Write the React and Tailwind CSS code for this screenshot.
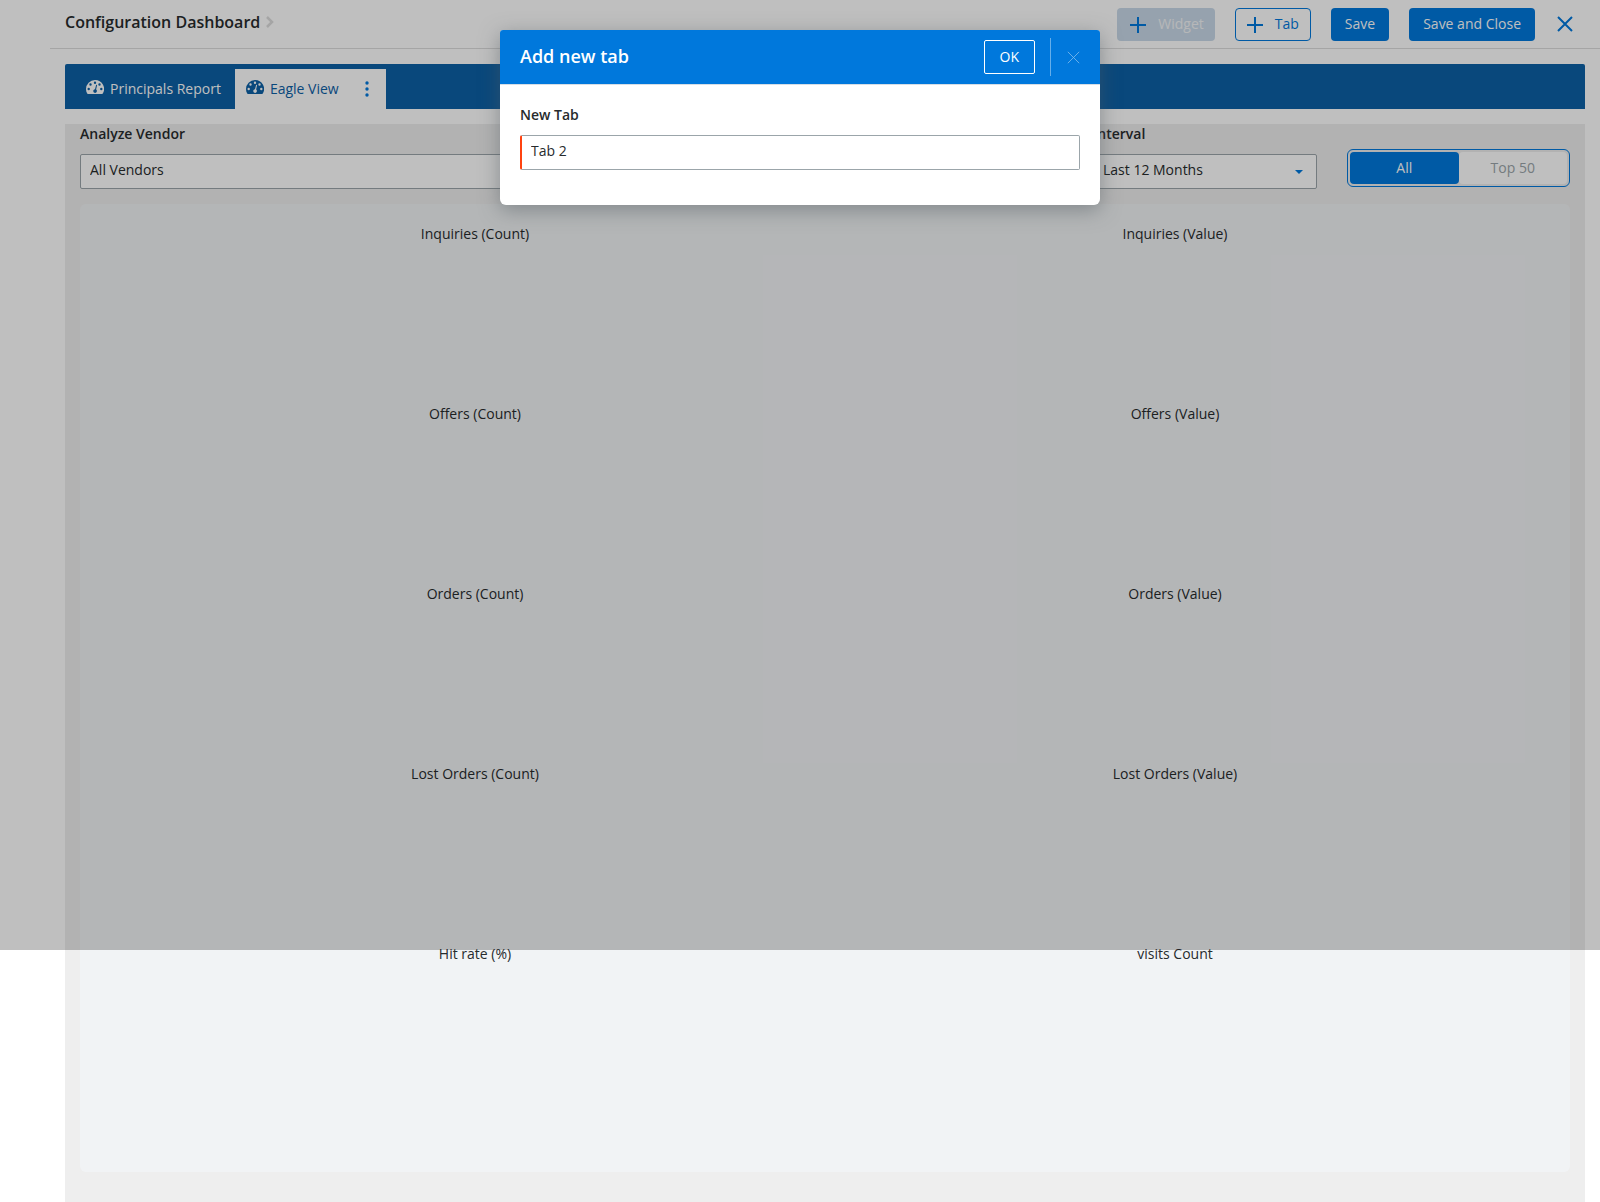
import { useState } from "react";

const TABS = [
  { id: "principals", label: "Principals Report" },
  { id: "eagle", label: "Eagle View" },
];

const WIDGETS = [
  "Inquiries (Count)",
  "Inquiries (Value)",
  "Offers (Count)",
  "Offers (Value)",
  "Orders (Count)",
  "Orders (Value)",
  "Lost Orders (Count)",
  "Lost Orders (Value)",
  "Hit rate (%)",
  "visits Count",
];

function GaugeIcon() {
  return (
    <svg width="18" height="14" viewBox="0 0 18 14" className="mb-1" aria-hidden="true">
      <path
        fill="currentColor"
        fillRule="evenodd"
        d="M9 0a9 9 0 0 0-9 9c0 1.700.4 3.200 1.200 4.600.2.300.4.400.7.400h14.200c.3 0 .5-.1.700-.4A9 9 0 0 0 9 0zM9 1.500a1.200 1.200 0 1 1 0 2.400 1.200 1.200 0 0 1 0-2.400zM4.500 3.300a1.200 1.200 0 1 1 0 2.400 1.200 1.200 0 0 1 0-2.400zM2.700 7.800a1.200 1.200 0 1 1 0 2.400 1.200 1.200 0 0 1 0-2.400zM15.300 7.800a1.200 1.200 0 1 1 0 2.400 1.200 1.200 0 0 1 0-2.400zM13.500 3.300a1.200 1.200 0 1 1 0 2.400 1.200 1.200 0 0 1 0-2.400zM10.200 4.700l.9.200-1 4.700a1.800 1.800 0 1 1-1.100-.3z"
      />
    </svg>
  );
}

function PlusIcon() {
  return (
    <svg width="16" height="16" viewBox="0 0 16 16" aria-hidden="true">
      <path d="M8 0v16M0 8h16" stroke="#0078dc" strokeWidth="2" />
    </svg>
  );
}

function CrossIcon({ size, stroke }) {
  return (
    <svg width={size} height={size} viewBox="0 0 16 16" fill="none" aria-hidden="true">
      <path d="M1 1l14 14M15 1L1 15" stroke="currentColor" strokeWidth={stroke} />
    </svg>
  );
}

function Header() {
  return (
    <header className="ml-[50px] flex h-[49px] items-start justify-between border-b border-[#dcdcdc] pt-2 pl-[15px] pr-[27px]">
      <div className="flex h-7 items-center gap-[6px]">
        <h1 className="text-base font-semibold">Configuration Dashboard</h1>
        <svg width="8" height="12" viewBox="0 0 8 12" fill="none" aria-hidden="true">
          <path d="M1 1l5 5-5 5" stroke="#dcdcdc" strokeWidth="2.500" />
        </svg>
      </div>
      <div className="flex h-[33px] items-stretch gap-5">
        <button disabled className="flex items-center gap-3 rounded bg-[#c9d9e8] pl-[13px] pr-[11px] text-[#f3f5f7]">
          <PlusIcon />
          <span className="pb-[2px]">Widget</span>
        </button>
        <button className="flex items-center gap-3 rounded border border-[#0078dc] bg-white px-[11px] text-[#0078dc]">
          <PlusIcon />
          <span className="pb-[2px]">Tab</span>
        </button>
        <button className="rounded bg-[#0078dc] px-[14px] pb-[2px] text-white">Save</button>
        <button className="rounded bg-[#0078dc] px-[14px] pb-[2px] text-white">Save and Close</button>
        <button aria-label="Close" className="ml-[2px] pb-[2px] text-[#0078dc]">
          <CrossIcon size={16} stroke={2} />
        </button>
      </div>
    </header>
  );
}

function TabBar({ active, onChange }) {
  return (
    <nav className="mx-[15px] flex h-[45px] items-end rounded-t-[2px] bg-[#0c60a6] pl-[10px]">
      {TABS.map((tab) => {
        const isActive = tab.id === active;
        return (
          <div
            key={tab.id}
            className={
              isActive
                ? "flex h-10 items-center bg-white text-[#0c60a6]"
                : "flex h-10 items-center text-white"
            }
          >
            <button
              onClick={() => onChange(tab.id)}
              className="flex h-full items-center gap-[6px] pl-[11px] pr-[14px]"
            >
              <GaugeIcon />
              {tab.label}
            </button>
            {isActive && (
              <button aria-label="Tab options" className="flex h-full items-center pl-3 pr-[17px] text-[#0078dc]">
                <svg width="4" height="16" viewBox="0 0 4 16" fill="currentColor" aria-hidden="true">
                  <circle cx="2" cy="2" r="1.700" />
                  <circle cx="2" cy="8" r="1.700" />
                  <circle cx="2" cy="14" r="1.700" />
                </svg>
              </button>
            )}
          </div>
        );
      })}
    </nav>
  );
}

function SelectField({ id, label, options }) {
  return (
    <div>
      <label htmlFor={id} className="block h-[30px] font-semibold leading-5">
        {label}
      </label>
      <div className="relative">
        <select
          id={id}
          className="h-[35px] w-full appearance-none rounded-[2px] border border-[#9ba5aa] bg-white px-[9px] pb-[3px]"
        >
          {options.map((o) => (
            <option key={o}>{o}</option>
          ))}
        </select>
        <svg width="8" height="4" viewBox="0 0 8 4" className="pointer-events-none absolute top-4 right-[14px]" aria-hidden="true">
          <path d="M0 0h8L4 4z" fill="#0078dc" />
        </svg>
      </div>
    </div>
  );
}

function RangeToggle() {
  const [value, setValue] = useState("All");
  return (
    <div className="mt-[25px] grid h-[38px] w-[223px] grid-cols-2 rounded-md border border-[#0078dc] bg-[#eeeeee] p-[2px]">
      {["All", "Top 50"].map((v) => (
        <button
          key={v}
          aria-pressed={v === value}
          onClick={() => setValue(v)}
          className={v === value ? "rounded bg-[#0078dc] text-white" : "rounded bg-white text-[#9ba5aa]"}
        >
          {v}
        </button>
      ))}
    </div>
  );
}

function AddTabDialog() {
  const [name, setName] = useState("Tab 2");
  return (
    <div className="absolute inset-x-0 top-0 flex h-[950px] items-start justify-center bg-black/25 pt-[30px]">
      <div
        role="dialog"
        aria-labelledby="dialog-title"
        className="w-[600px] rounded-t-[3px] rounded-b-md bg-white shadow-[0_5px_20px_rgba(80,90,95,0.5)]"
      >
        <div className="flex h-[55px] items-center justify-between rounded-t-[3px] border-b border-[#d5dde5] bg-[#0078dc] pl-5 pr-5 text-white">
          <h2 id="dialog-title" className="pb-[2px] text-lg font-semibold">Add new tab</h2>
          <div className="flex items-center gap-[15px]">
            <button className="h-[34px] rounded-[2px] border border-white px-[15px]">OK</button>
            <div className="flex h-[38px] items-center border-l border-[#66aeea] pl-4">
              <button aria-label="Close dialog" className="text-[#80bced]">
                <CrossIcon size={13} stroke={1} />
              </button>
            </div>
          </div>
        </div>
        <div className="px-5 pt-5 pb-[35px]">
          <label htmlFor="tab-name" className="block h-[30px] font-semibold leading-5">New Tab</label>
          <input
            id="tab-name"
            value={name}
            onChange={(e) => setName(e.target.value)}
            className="block h-[35px] w-full rounded-[2px] border border-l-2 border-[#9ba5aa] border-l-[#ff4310] px-[9px] pb-1 outline-none"
          />
        </div>
      </div>
    </div>
  );
}

export default function App() {
  const [active, setActive] = useState("eagle");

  return (
    <div className="relative flex min-h-screen flex-col bg-white font-['Open_Sans','Noto_Sans',sans-serif] text-sm text-[#272b2d]">
      <Header />
      <div className="flex flex-1 flex-col pt-[15px] pl-[50px]">
        <TabBar active={active} onChange={setActive} />
        <main className="mx-[15px] mt-[15px] flex-1 bg-[#eeeeee] px-[15px] pb-[30px]">
          <div className="grid grid-cols-[1fr_224px_223px] gap-x-[30px]">
            <SelectField id="vendor" label="Analyze Vendor" options={["All Vendors"]} />
            <SelectField id="interval" label="Interval" options={["Last 12 Months"]} />
            <RangeToggle />
          </div>

          {/* Widget grid */}
          <div className="mt-[15px] grid auto-rows-[180px] grid-cols-2 rounded-md bg-[#f1f3f5] px-[45px] pt-5 pb-12 text-center">
            {WIDGETS.map((title) => (
              <section key={title}>
                <h3>{title}</h3>
              </section>
            ))}
          </div>
        </main>
      </div>
      <AddTabDialog />
    </div>
  );
}
